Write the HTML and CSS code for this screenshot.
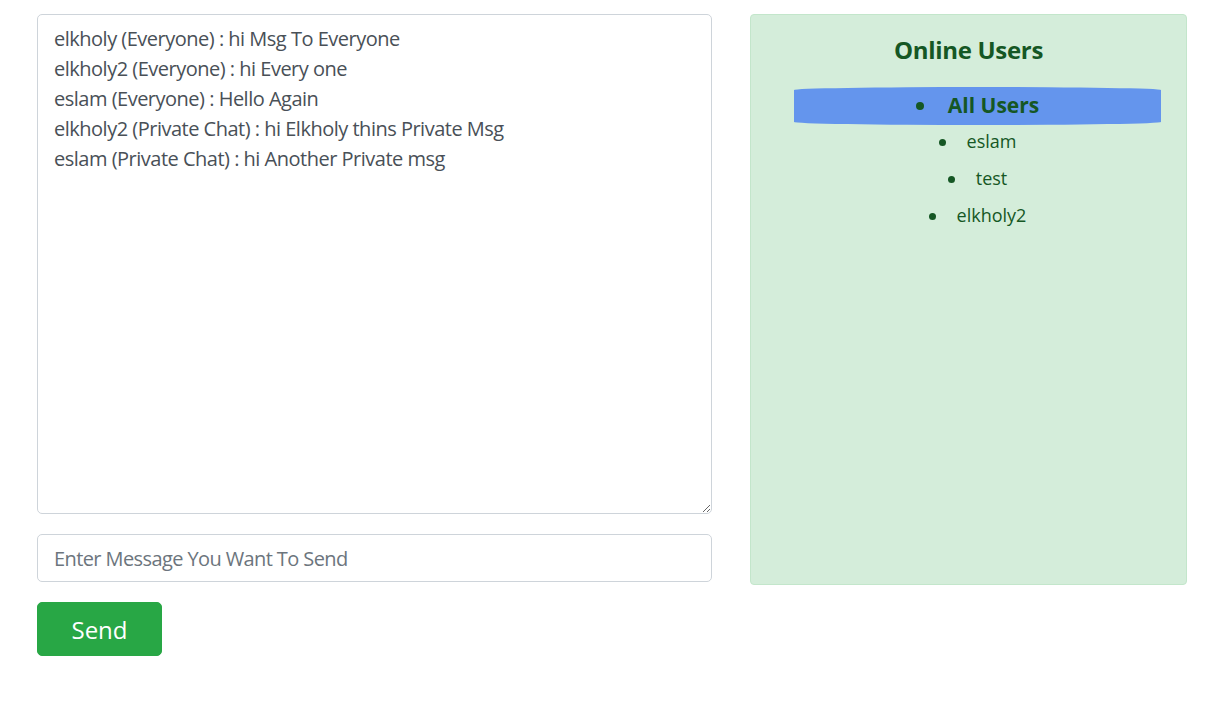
FILE: index.html
```html
<!DOCTYPE html>
<html>
<head>
<meta charset="utf-8">
<link rel="stylesheet" href="styles.css">
</head>
<body>
<div class="page">
  <div class="chat">
    <textarea class="messages">elkholy (Everyone) : hi Msg To Everyone
elkholy2 (Everyone) : hi Every one
eslam (Everyone) : Hello Again
elkholy2 (Private Chat) : hi Elkholy thins Private Msg
eslam (Private Chat) : hi Another Private msg</textarea>
    <input class="msg-input" type="text" placeholder="Enter Message You Want To Send">
    <button class="send-btn">Send</button>
  </div>
  <div class="users">
    <h4 class="users-title">Online Users</h4>
    <ul class="user-list">
      <li class="user active">All Users</li>
      <li class="user">eslam</li>
      <li class="user">test</li>
      <li class="user">elkholy2</li>
    </ul>
  </div>
</div>
</body>
</html>
```
FILE: styles.css
```css
html, body {
  margin: 0;
  padding: 0;
  background: #fff;
}
body {
  font-family: "Open Sans", "Noto Sans", sans-serif;
  color: #212529;
}
.page {
  display: flex;
  align-items: flex-start;
  gap: 38px;
  padding: 14px 0 0 37px;
}
.chat {
  display: flex;
  flex-direction: column;
  align-items: flex-start;
  width: 675px;
}
.messages {
  box-sizing: border-box;
  width: 675px;
  height: 500px;
  margin: 0 0 20px;
  padding: 9px 16px 7px;
  font-family: inherit;
  font-size: 20px;
  letter-spacing: -0.5px;
  line-height: 30px;
  color: #495057;
  border: 1px solid #ced4da;
  border-radius: 5px;
  background: #fff;
  outline: none;
}
.msg-input {
  box-sizing: border-box;
  width: 675px;
  height: 48px;
  margin: 0 0 20px;
  padding: 8px 16px;
  font-family: inherit;
  font-size: 20px;
  letter-spacing: -0.6px;
  color: #495057;
  border: 1px solid #ced4da;
  border-radius: 5px;
  outline: none;
}
.msg-input::placeholder {
  color: #6c757d;
  opacity: 1;
}
.send-btn {
  box-sizing: border-box;
  width: 125px;
  height: 54px;
  padding: 0;
  font-family: inherit;
  font-size: 24px;
  color: #fff;
  background: #28a745;
  border: 1px solid #28a745;
  border-radius: 5px;
}
.users {
  box-sizing: border-box;
  width: 437px;
  height: 571px;
  padding: 20px 0 0;
  background: #d4edda;
  border: 1px solid #c3e6cb;
  border-radius: 4px;
  color: #155724;
}
.users-title {
  margin: 0 0 23px;
  font-size: 24px;
  letter-spacing: -0.3px;
  line-height: 29px;
  font-weight: 700;
  text-align: center;
}
.user-list {
  margin: 0 25px 0 43px;
  padding: 0;
  list-style: none;
  text-align: center;
}
.user {
  font-size: 18px;
  line-height: 27px;
  padding: 3px 0 7px;
}
.user::before {
  content: "";
  display: inline-block;
  width: 7px;
  height: 7px;
  margin-right: 21px;
  border-radius: 50%;
  background: #155724;
  vertical-align: middle;
  position: relative;
  top: -1px;
}
.user.active {
  font-size: 21px;
  font-weight: 700;
  line-height: 30px;
  padding: 3px 0 5px;
  background: #6495ed;
  border-radius: 50% / 3px;
}
.user.active::before {
  width: 8px;
  height: 8px;
  margin-right: 24px;
}
```
